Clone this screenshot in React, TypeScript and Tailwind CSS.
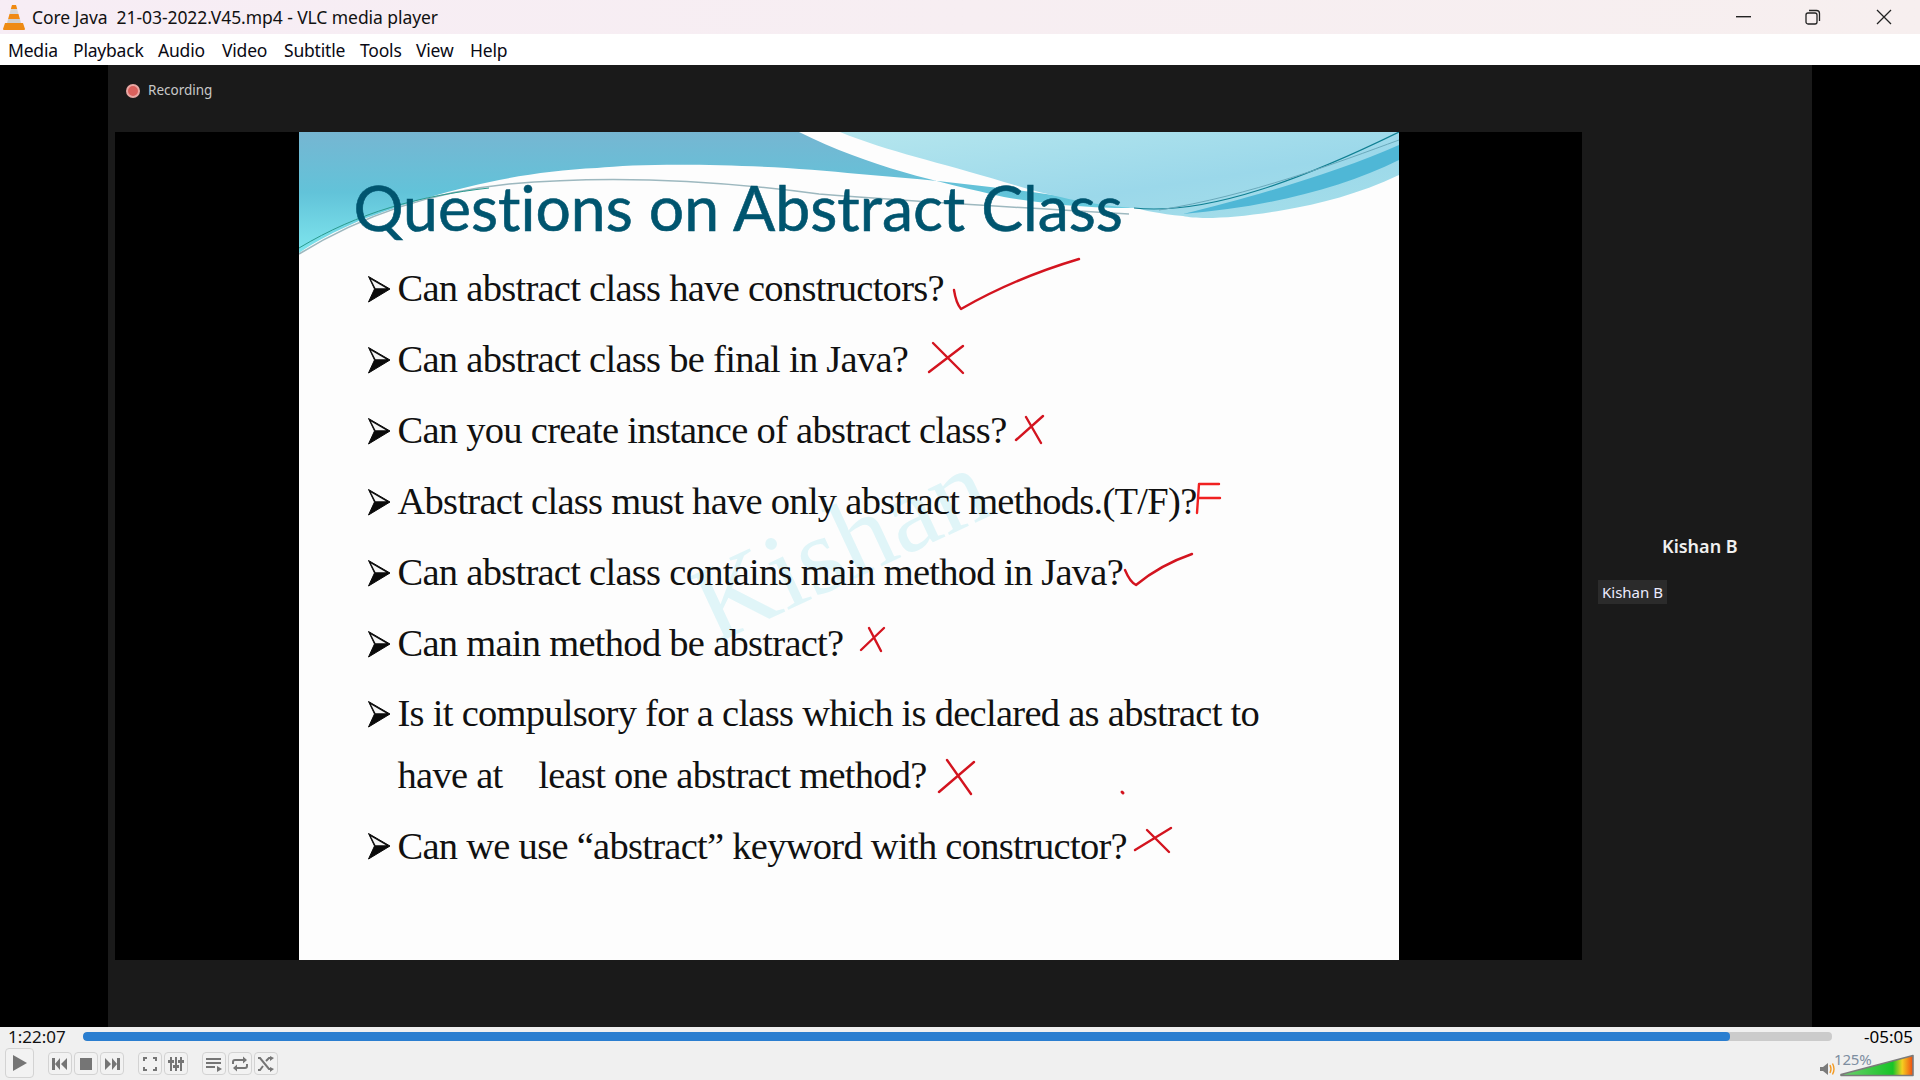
import React from "react";

const menu: [string, string][] = [
  ["Media", "w-[65px]"],
  ["Playback", "w-[85px]"],
  ["Audio", "w-[64px]"],
  ["Video", "w-[62px]"],
  ["Subtitle", "w-[76px]"],
  ["Tools", "w-[56px]"],
  ["View", "w-[54px]"],
  ["Help", "w-[50px]"],
];

const Cone = () => (
  <svg width="22" height="26" viewBox="0 0 22 26" className="shrink-0">
    <path d="M9 1h4l1.2 4H7.8z" fill="#f08a12" />
    <path d="M7.8 5h6.4l1.3 5H6.500z" fill="#d8d8d8" />
    <path d="M6.5 10h9l1.4 5H5.1z" fill="#f08a12" />
    <path d="M5.1 15h11.8l1.2 4.500H3.9z" fill="#cfcfcf" />
    <path d="M2 19h18l2 6a1 1 0 0 1-1 1H1a1 1 0 0 1-1-1z" fill="#ee8b14" />
  </svg>
);

const Btn = ({ children }: { children: React.ReactNode }) => (
  <div className="w-[24px] h-[23px] rounded-[4px] border border-[#d3d3d3] bg-[#f2f2f2] flex items-center justify-center shrink-0">
    {children}
  </div>
);

const G = ({ children }: { children: React.ReactNode }) => (
  <svg width="18" height="16" viewBox="0 0 18 16" fill="#757575">
    {children}
  </svg>
);

const Arrow = () => (
  <svg width="24" height="28" viewBox="0 0 24 28" className="shrink-0 ml-[1px]">
    <path d="M1.500 1.500L23 14L1.500 27L7.500 14Z" fill="#0a0a0a" stroke="#0a0a0a" strokeWidth="1" strokeLinejoin="round" />
    <path d="M4 4.500L19 13.200H8.500Z" fill="#f4f4f4" />
  </svg>
);

const Row = ({ text, h = "h-[71px]", arrow = true }: { text: string; h?: string; arrow?: boolean }) => (
  <div className={`${h} flex items-center`}>
    <span className="w-[32px] shrink-0 flex">{arrow ? <Arrow /> : null}</span>
    <span className="font-['Liberation_Serif',serif] text-[38.5px] leading-none tracking-[-0.72px] text-[#111] whitespace-pre">{text}</span>
  </div>
);

const Marks = () => (
  <svg className="absolute left-0 top-0 pointer-events-none" width="1100" height="828" viewBox="299 132 1100 828" fill="none" stroke="#d3141f" strokeWidth="2.4" strokeLinecap="round" strokeLinejoin="round">
    <path d="M954 290 Q956 303 961 309 Q1015 278 1079 259" />
    <path d="M933 343 L963 373 M963 346 L929 372" />
    <path d="M1026 417 L1041 443 M1043 416 L1016 440" />
    <path d="M1219 484 L1199 484 L1197 513 M1198 498 L1220 498" stroke="#f02020" />
    <path d="M1125 570 Q1130 582 1136 585 Q1160 565 1192 554" />
    <path d="M869 628 L881 651 M884 628 L861 650" />
    <path d="M947 760 L971 794 M974 762 L939 792" />
    <path d="M1122 792 L1123 793" strokeWidth="3" />
    <path d="M1171 828 L1135 850 M1147 830 L1169 852" />
  </svg>
);

const Waves = () => (
  <svg className="absolute left-0 top-0" width="1100" height="130" viewBox="0 0 1100 130">
    <defs>
      <linearGradient id="a" x1="0" y1="0" x2="0" y2="1">
        <stop offset="0" stopColor="#76b6d2" />
        <stop offset="0.5" stopColor="#62c3d9" />
        <stop offset="1" stopColor="#7fe6ee" />
      </linearGradient>
      <linearGradient id="b" x1="0" y1="0" x2="1" y2="1">
        <stop offset="0" stopColor="#b5e6ee" />
        <stop offset="0.6" stopColor="#9bd8ea" />
        <stop offset="1" stopColor="#a6dfe9" />
      </linearGradient>
    </defs>
    <path d="M0 0H500C570 35 640 50 705 65C760 74 800 76 835 76C760 62 660 50 560 42C470 32 350 30 298 36C205 40 120 66 62 88C35 100 15 110 0 121Z" fill="url(#a)" />
    <path d="M541 0H1100V43C1060 62 1020 72 985 78C940 86 900 88 884 84C860 82 845 78 835 76C780 72 740 60 705 50C640 30 590 20 541 0Z" fill="url(#b)" />
    <path d="M1100 13V28C1040 58 960 76 884 82C950 66 1040 40 1100 13Z" fill="#4fb7d6" />
    <path d="M835 76C910 84 1010 44 1100 0" fill="none" stroke="#0f7f92" strokeWidth="1.2" />
    <path d="M860 78C950 64 1040 30 1100 8" fill="none" stroke="#6aa9bb" strokeWidth="1" />
    <path d="M0 122C60 85 130 60 210 52C320 42 430 50 520 62C620 70 760 78 830 82" fill="none" stroke="#9db8bf" strokeWidth="1.5" />
    <path d="M0 116C60 80 120 64 190 56" fill="none" stroke="#2a9a8e" strokeWidth="1" />
  </svg>
);

export default function App() {
  return (
    <div className="w-[1920px] h-[1080px] flex flex-col overflow-hidden font-['Noto_Sans',sans-serif]">
      <div className="h-[34px] shrink-0 bg-gradient-to-r from-[#f7edf5] to-[#f7efef] flex items-center relative">
        <div className="pl-[3px] pr-[7px] flex"><Cone /></div>
        <span className="pt-[1px] text-[17.5px] tracking-[-0.07px] leading-none text-[#111] whitespace-pre">Core Java  21-03-2022.V45.mp4 - VLC media player</span>
        <div className="ml-auto flex items-center">
          <svg width="15" height="2" className="mr-[54px]"><rect width="15" height="1.4" fill="#222" /></svg>
          <svg width="16" height="16" viewBox="0 0 16 16" fill="none" stroke="#222" strokeWidth="1.3" className="mr-[55px]">
            <rect x="1" y="4" width="11" height="11" rx="2" />
            <path d="M4 1.500h7.500a3 3 0 0 1 3 3V12" />
          </svg>
          <svg width="16" height="16" viewBox="0 0 16 16" stroke="#222" strokeWidth="1.3" className="mr-[28px]">
            <path d="M1 1l14 14M15 1L1 15" />
          </svg>
        </div>
      </div>

      <div className="h-[31px] shrink-0 bg-white flex items-center pl-[8px] pt-[2px] text-[17.5px] tracking-[-0.2px] text-[#0a0a14]">
        {menu.map(([m, w]) => (
          <span key={m} className={`${w} leading-none`}>{m}</span>
        ))}
      </div>

      <div className="h-[962px] shrink-0 bg-black flex justify-center">
        <div className="w-[1704px] bg-[#1a1a1a] flex flex-col">
          <div className="h-[67px] shrink-0 flex items-center pl-[18px] pb-[16px] gap-[8px]">
            <span className="w-[14px] h-[14px] rounded-full bg-[#d9605c] border-2 border-[#e9a7a3] blur-[0.5px]" />
            <span className="text-[13.5px] leading-none text-[#c8c8c8]">Recording</span>
          </div>
          <div className="flex h-[828px]">
            <div className="ml-[7px] w-[1467px] bg-black flex justify-center shrink-0">
              <div className="w-[1100px] h-[828px] bg-[#fdfdfd] relative overflow-hidden">
                <Waves />
                <div className="relative h-[121px] pl-[55px] pt-[44px]">
                  <div className="font-['Lato',sans-serif] [font-variant-ligatures:none] [-webkit-text-stroke:0.6px_#00556f] text-[62.5px] leading-none text-[#00556f] whitespace-pre">Questions on Abstract Class</div>
                </div>
                <div className="absolute left-[385px] top-[358px] font-['Liberation_Serif',serif] text-[110px] leading-none text-[#e0f5f8] -rotate-[25deg]">Kishan</div>
                <div className="relative pl-[67px]">
                  <Row text="Can abstract class have constructors?" />
                  <Row text="Can abstract class be final in Java?" />
                  <Row text="Can you create instance of abstract class?" />
                  <Row text="Abstract class must have only abstract methods.(T/F)?" />
                  <Row text="Can abstract class contains main method in Java?" />
                  <Row text="Can main method be abstract?" />
                  <Row text="Is it compulsory for a class which is declared as abstract to" h="h-[69px]" />
                  <Row text="have at    least one abstract method?" h="h-[54px]" arrow={false} />
                  <Row text="Can we use “abstract” keyword with constructor?" h="h-[88px]" />
                </div>
                <Marks />
              </div>
            </div>
            <div className="flex-1 flex flex-col pt-[403px] pl-[16px]">
              <div className="pl-[64px] text-[18px] leading-[22px] font-semibold text-[#f0f0f0]">Kishan B</div>
              <div className="mt-[23px] self-start h-[24px] px-[4px] bg-[#2b2b2b] text-[15px] leading-[24px] text-[#ececff]">Kishan B</div>
            </div>
          </div>
        </div>
      </div>

      <div className="h-[53px] shrink-0 bg-[#f0f0f0] flex flex-col">
        <div className="h-[19px] flex items-center shrink-0">
          <span className="w-[83px] pl-[8px] text-[17px] leading-none text-[#111]">1:22:07</span>
          <div className="w-[1749px] h-[9px] rounded-[4px] bg-[#cbcbcb] overflow-hidden">
            <div className="w-[1647px] h-full rounded-[4px] bg-[#2a7ed0]" />
          </div>
          <span className="flex-1 text-right pr-[7px] text-[17px] leading-none text-black">-05:05</span>
        </div>
        <div className="flex items-start pl-[5px] pt-[2px] relative">
          <div className="w-[29px] h-[30px] rounded-[4px] border border-[#d3d3d3] bg-[#f2f2f2] flex items-center justify-center mr-[14px]">
            <svg width="16" height="18" viewBox="0 0 16 18" fill="#757575"><path d="M1 1l14 8-14 8z" /></svg>
          </div>
          <div className="flex gap-[2px] pt-[4px] mr-[14px]">
            <Btn><G><path d="M1 2h3v12H1zM9 2v12L4 8zM16 2v12L10 8z" /></G></Btn>
            <Btn><G><rect x="3" y="2" width="12" height="12" /></G></Btn>
            <Btn><G><path d="M17 2h-3v12h3zM9 2v12l5-6zM2 2v12l6-6z" /></G></Btn>
          </div>
          <div className="flex gap-[2px] pt-[4px] mr-[14px]">
            <Btn><G><path d="M2 1h4v2H4v2H2zM12 1h4v4h-2V3h-2zM2 11h2v2h2v2H2zM14 11h2v4h-4v-2h2z" /></G></Btn>
            <Btn><G><path d="M3 1h2v3h2v3H5v8H3V7H1V4h2zM8 1h2v8h2v3h-2v3H8v-3H6V9h2zM13 1h2v3h2v3h-2v8h-2V7h-2V4h2z" /></G></Btn>
          </div>
          <div className="flex gap-[2px] pt-[4px]">
            <Btn><G><path d="M1 2h15v2H1zM1 6h15v2H1zM1 10h9v2H1zM12 10l5 3-5 3z" /></G></Btn>
            <Btn>
              <svg width="18" height="16" viewBox="0 0 18 16" fill="none" stroke="#757575" strokeWidth="2">
                <path d="M2 8V6a2 2 0 0 1 2-2h9M16 8v2a2 2 0 0 1-2 2H5" />
                <path d="M12 0.500l4 3.500-4 3.500zM6 8.500L2 12l4 3.500z" fill="#757575" stroke="none" />
              </svg>
            </Btn>
            <Btn>
              <svg width="18" height="16" viewBox="0 0 18 16" fill="none" stroke="#757575" strokeWidth="2">
                <path d="M1 2h2l9 11h2M1 14h2l3-4M9 5l3-3h2" />
                <path d="M13 0l4 2-4 3zM13 11l4 2-4 3z" fill="#757575" stroke="none" />
              </svg>
            </Btn>
          </div>
          <div className="ml-auto mr-[6px] mt-[3px] w-[94px] h-[26px] relative">
            <span className="absolute left-[14px] top-[1px] text-[15px] leading-none text-[#7d8ea0] tracking-[-0.2px]">125%</span>
            <svg className="absolute left-0 top-0" width="94" height="26" viewBox="0 0 94 26">
              <defs>
                <linearGradient id="v" x1="0" x2="1" y1="0" y2="0">
                  <stop offset="0" stopColor="#6fd06f" />
                  <stop offset="0.72" stopColor="#18c428" />
                  <stop offset="0.85" stopColor="#f5cf20" />
                  <stop offset="1" stopColor="#f04a10" />
                </linearGradient>
              </defs>
              <path d="M21 23.500L93 4.500V24.500H21Z" fill="url(#v)" stroke="#7b7b7b" strokeWidth="1.6" strokeLinejoin="round" />
              <path d="M0 16h3l5-4v12l-5-4H0z" fill="#7b7b7b" />
              <path d="M10 14q2 4 0 8M12.500 12.500q3 5.500 0 11" fill="none" stroke="#f39a21" strokeWidth="1.4" />
            </svg>
          </div>
        </div>
      </div>
    </div>
  );
}
